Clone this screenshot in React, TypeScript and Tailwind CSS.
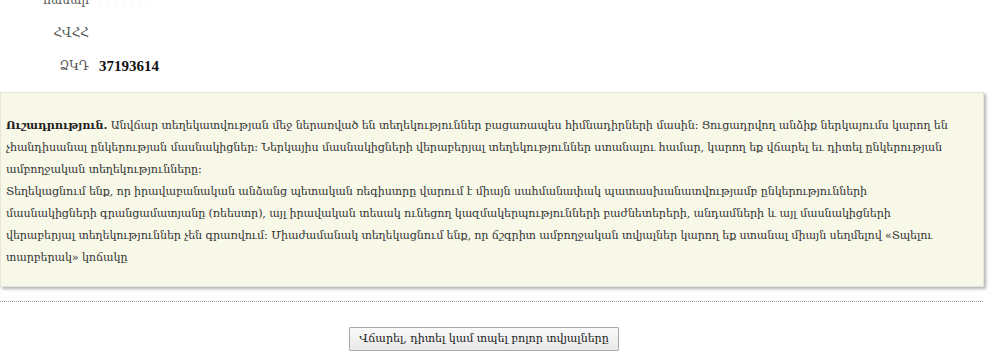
import React from "react";

const font = { fontFamily: '"DejaVu Serif", "Liberation Serif", serif' };

export default function App() {
  return (
    <div className="w-[998px] h-[360px] overflow-hidden bg-white text-[#333]" style={font}>
      <div className="mt-[-17px] flex flex-col">
        <div className="flex items-center h-[33px]">
          <div className="w-[89px] text-right text-[12px] text-[#555]">համար</div>
          <div className="ml-[10px] text-[12px] text-[#eee]">. . . . . . .</div>
        </div>
        <div className="flex items-center h-[33px]">
          <div className="w-[89px] text-right text-[12px] text-[#555]">ՀՎՀՀ</div>
        </div>
        <div className="flex items-center h-[34px]">
          <div className="w-[89px] text-right text-[12px] text-[#555]">ՁԿԴ</div>
          <div className="ml-[10px] text-[15px] font-bold text-[#111]" style={{ fontFamily: '"Liberation Serif", serif' }}>37193614</div>
        </div>
      </div>
      <div className="mt-[9px] w-[984px] bg-[#f8f8e9] border border-[#e6e6d8] shadow-[2px_2px_3px_rgba(0,0,0,0.3)] px-[5px] pt-[21px] pb-[17px] text-[11.2px] leading-[22px] tracking-[-0.15px] text-[#333] whitespace-nowrap">
        <p>
          <b className="text-[#222]">Ուշադրություն.</b> Անվճար տեղեկատվության մեջ ներառված են տեղեկություններ բացառապես հիմնադիրների մասին: Ցուցադրվող անձիք ներկայումս կարող են
          <br />
          չհանդիսանալ ընկերության մասնակիցներ: Ներկայիս մասնակիցների վերաբերյալ տեղեկություններ ստանալու համար, կարող եք վճարել եւ դիտել ընկերության
          <br />
          ամբողջական տեղեկությունները:
        </p>
        <p>
          Տեղեկացնում ենք, որ իրավաբանական անձանց պետական ռեգիստրը վարում է միայն սահմանափակ պատասխանատվությամբ ընկերությունների
          <br />
          մասնակիցների գրանցամատյանը (ռեեստր), այլ իրավական տեսակ ունեցող կազմակերպությունների բաժնետերերի, անդամների և այլ մասնակիցների
          <br />
          վերաբերյալ տեղեկություններ չեն գրառվում: Միաժամանակ տեղեկացնում ենք, որ ճշգրիտ ամբողջական տվյալներ կարող եք ստանալ միայն սեղմելով «Տպելու
          <br />
          տարբերակ» կոճակը
        </p>
      </div>
      <div className="mt-[14px] w-[983px] border-t border-dotted border-[#999]"></div>
      <div className="flex justify-center mt-[25px] w-[968px]">
        <button className="h-[24px] px-[9px] border border-[#aaa] bg-gradient-to-b from-[#fafafa] to-[#e8e8e8] text-[11.2px] tracking-[-0.1px] text-[#222] rounded-[1px]">
          Վճարել, դիտել կամ տպել բոլոր տվյալները
        </button>
      </div>
    </div>
  );
}
